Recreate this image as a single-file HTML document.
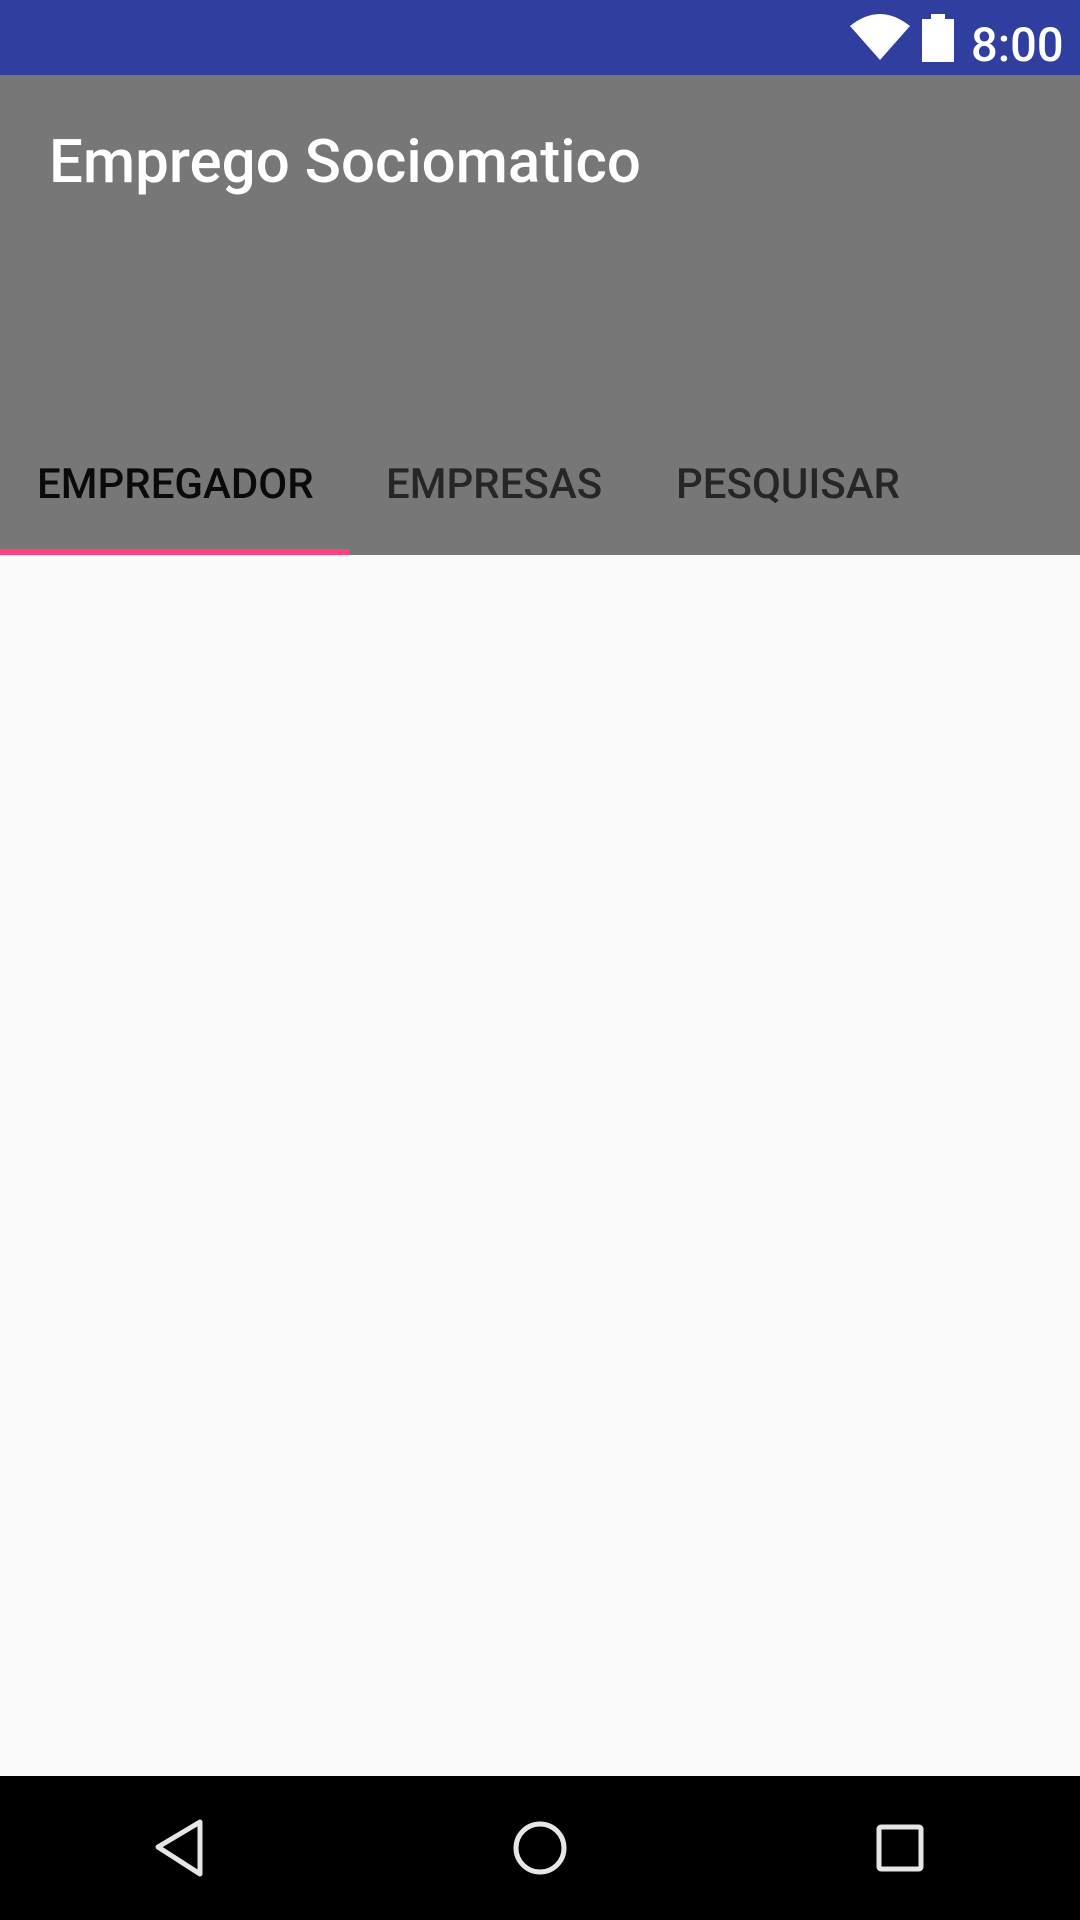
<!DOCTYPE html>
<html><head><style>
body{margin:0;width:1080px;height:1920px;background:#fafafa;position:relative;overflow:hidden;font-family:"Roboto","Liberation Sans",sans-serif}
.a{position:absolute}
</style></head><body>
<div class="a" style="left:0;top:0;width:1080px;height:75px;background:#303f9f"></div>
<svg class="a" style="left:0;top:0" width="1080" height="75">
<path d="M850 26 Q880 2 910 26 L880 60 Z" fill="#fff"/>
<rect x="931" y="14" width="14" height="6" fill="#fff"/>
<rect x="922" y="19" width="32" height="43" fill="#fff"/>
<text x="971" y="61" fill="#fff" font-family="Roboto, Liberation Sans" font-weight="500" font-size="47">8:00</text>
</svg>
<div class="a" style="left:0;top:75px;width:1080px;height:480px;background:#777"></div>
<div class="a" style="left:49px;top:126px;font-size:60px;font-weight:500;color:#fff;line-height:72px">Emprego Sociomatico</div>
<div class="a" style="left:37px;top:459px;font-size:42px;font-weight:500;color:#0a0a0a;line-height:52px">EMPREGADOR</div>
<div class="a" style="left:386px;top:459px;font-size:42px;font-weight:500;color:#262626;line-height:52px">EMPRESAS</div>
<div class="a" style="left:676px;top:459px;font-size:42px;font-weight:500;color:#262626;line-height:52px">PESQUISAR</div>
<div class="a" style="left:0;top:549px;width:349px;height:6px;background:#ff4081"></div>
<div class="a" style="left:0;top:1776px;width:1080px;height:144px;background:#000"></div>
<svg class="a" style="left:0;top:1776px" width="1080" height="144">
<path d="M200 46 L200 98 L158 71 Z" fill="none" stroke="#e6e6e6" stroke-width="5" stroke-linejoin="round"/>
<circle cx="540" cy="72" r="24" fill="none" stroke="#e6e6e6" stroke-width="5"/>
<rect x="879" y="51" width="42" height="42" rx="2" fill="none" stroke="#e6e6e6" stroke-width="5"/>
</svg>
</body></html>
